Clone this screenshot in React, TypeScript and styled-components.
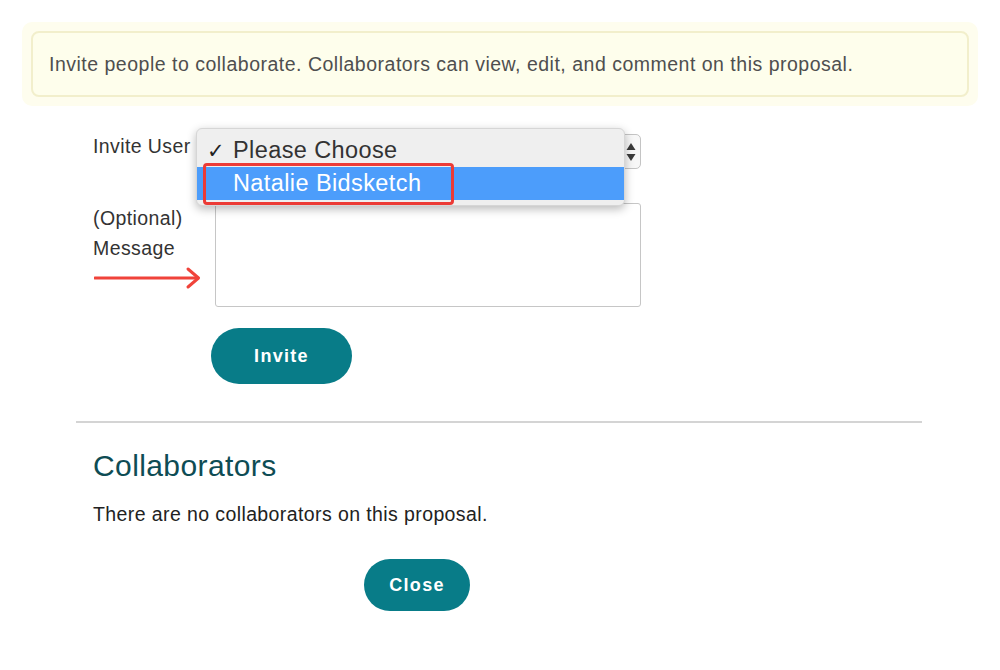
import styled, { createGlobalStyle } from "styled-components"

const GlobalStyle = createGlobalStyle`
  body {
    margin: 0;
    background: #ffffff;
    font-family: "Liberation Sans", Arial, sans-serif;
    color: #333333;
  }
`

const Page = styled.div`
  width: 1000px;
  height: 670px;
  padding-top: 22px;
  box-sizing: border-box;
  overflow: hidden;
`

const NoticeGlow = styled.div`
  margin: 0 22px;
  padding: 9px;
  background: #fefdee;
  border-radius: 10px;
`

const Notice = styled.div`
  height: 66px;
  box-sizing: border-box;
  display: flex;
  align-items: center;
  padding-left: 16px;
  background: #fefeec;
  border: 2px solid #f2efcc;
  border-radius: 8px;
  font-size: 19.5px;
  letter-spacing: 0.5px;
  color: #4f4f4f;
`

const Content = styled.div`
  margin-left: 76px;
  width: 846px;
`

const Form = styled.div`
  padding-left: 17px;
  padding-top: 25px;
  display: grid;
  grid-template-columns: 122px 426px;
  row-gap: 34px;
`

const Label = styled.div`
  font-size: 19.5px;
  letter-spacing: 0.4px;
  line-height: 30px;
  color: #333333;
`

const SelectWrap = styled.div`
  position: relative;
  height: 35px;
  margin-top: 3px;
`

const SelectBox = styled.div`
  height: 100%;
  box-sizing: border-box;
  border: 1px solid #c4c4c4;
  border-radius: 5px;
  background: #f7f7f7;
  display: flex;
  justify-content: flex-end;
  align-items: center;
  padding-right: 3px;
`

const Popup = styled.div`
  position: absolute;
  left: -19px;
  top: -6px;
  width: 429px;
  padding: 5px 0 5px;
  background: #efefef;
  border: 1px solid #d6d6d6;
  border-radius: 6px;
  box-shadow: 0 3px 10px rgba(0, 0, 0, 0.28);
  box-sizing: border-box;
`

const Option = styled.div<{ $active?: boolean }>`
  position: relative;
  height: 33px;
  display: flex;
  align-items: center;
  padding-left: 36px;
  font-size: 23.5px;
  letter-spacing: 0.4px;
  color: ${({ $active }) => ($active ? "#ffffff" : "#333333")};
  background: ${({ $active }) => ($active ? "#4c9dfb" : "transparent")};
`

const Check = styled.span`
  position: absolute;
  left: 10px;
  font-size: 21px;
  color: #222222;
`

const Highlight = styled.div`
  position: absolute;
  left: 6px;
  top: 34px;
  width: 251px;
  height: 42px;
  box-sizing: border-box;
  border: 3px solid #ec3b36;
  border-radius: 4px;
`

const LabelCell = styled.div`
  display: flex;
  flex-direction: column;
`

const Arrow = styled.svg`
  margin-left: 1px;
`

const TextArea = styled.textarea`
  height: 104px;
  box-sizing: border-box;
  border: 1px solid #c6c6c6;
  border-radius: 3px;
  resize: none;
  font-family: inherit;
`

const ButtonRow = styled.div<{ $offset: number }>`
  padding-left: ${({ $offset }) => $offset}px;
`

const PillButton = styled.button<{ $w: number; $h: number }>`
  width: ${({ $w }) => $w}px;
  height: ${({ $h }) => $h}px;
  border: none;
  border-radius: ${({ $h }) => $h / 2}px;
  background: #087c88;
  color: #ffffff;
  font-family: "Liberation Sans", Arial, sans-serif;
  font-weight: bold;
  font-size: 18px;
  letter-spacing: 1.3px;
  cursor: pointer;
`

const Divider = styled.hr`
  margin: 37px 0 0;
  border: none;
  height: 2px;
  background: #d4d4d4;
`

const Section = styled.div`
  padding-left: 17px;
`

const Heading = styled.h2`
  margin: 26px 0 0;
  font-size: 30px;
  letter-spacing: 0.4px;
  line-height: 34px;
  font-weight: normal;
  color: #0e4c54;
`

const Text = styled.p`
  margin: 19px 0 33px;
  font-size: 19.5px;
  letter-spacing: 0.4px;
  line-height: 24px;
  color: #222222;
`

export default function App() {
  return (
    <Page>
      <GlobalStyle />
      <NoticeGlow>
        <Notice>
          Invite people to collaborate. Collaborators can view, edit, and comment on this proposal.
        </Notice>
      </NoticeGlow>
      <Content>
        <Form>
          <Label>Invite User</Label>
          <SelectWrap>
            <SelectBox>
              <svg width="12" height="24" viewBox="0 0 12 24">
                <path d="M6 3 L10.5 10 H1.5 Z" fill="#3a3a3a" />
                <path d="M6 21 L10.5 14 H1.5 Z" fill="#3a3a3a" />
              </svg>
            </SelectBox>
            <Popup>
              <Option>
                <Check>✓</Check>
                Please Choose
              </Option>
              <Option $active>Natalie Bidsketch</Option>
              <Highlight />
            </Popup>
          </SelectWrap>
          <LabelCell>
            <Label>(Optional)</Label>
            <Label>Message</Label>
            <Arrow width="108" height="30" viewBox="0 0 108 30">
              <path d="M1 15 H104" stroke="#f0433a" strokeWidth="3" strokeLinecap="round" />
              <path d="M94 6 L104.5 15 L94 24" stroke="#f0433a" strokeWidth="3" fill="none" strokeLinecap="round" strokeLinejoin="round" />
            </Arrow>
          </LabelCell>
          <TextArea />
        </Form>
        <ButtonRow $offset={135} style={{ marginTop: 21 }}>
          <PillButton $w={141} $h={56}>Invite</PillButton>
        </ButtonRow>
        <Divider />
        <Section>
          <Heading>Collaborators</Heading>
          <Text>There are no collaborators on this proposal.</Text>
        </Section>
        <ButtonRow $offset={288}>
          <PillButton $w={106} $h={52}>Close</PillButton>
        </ButtonRow>
      </Content>
    </Page>
  )
}
